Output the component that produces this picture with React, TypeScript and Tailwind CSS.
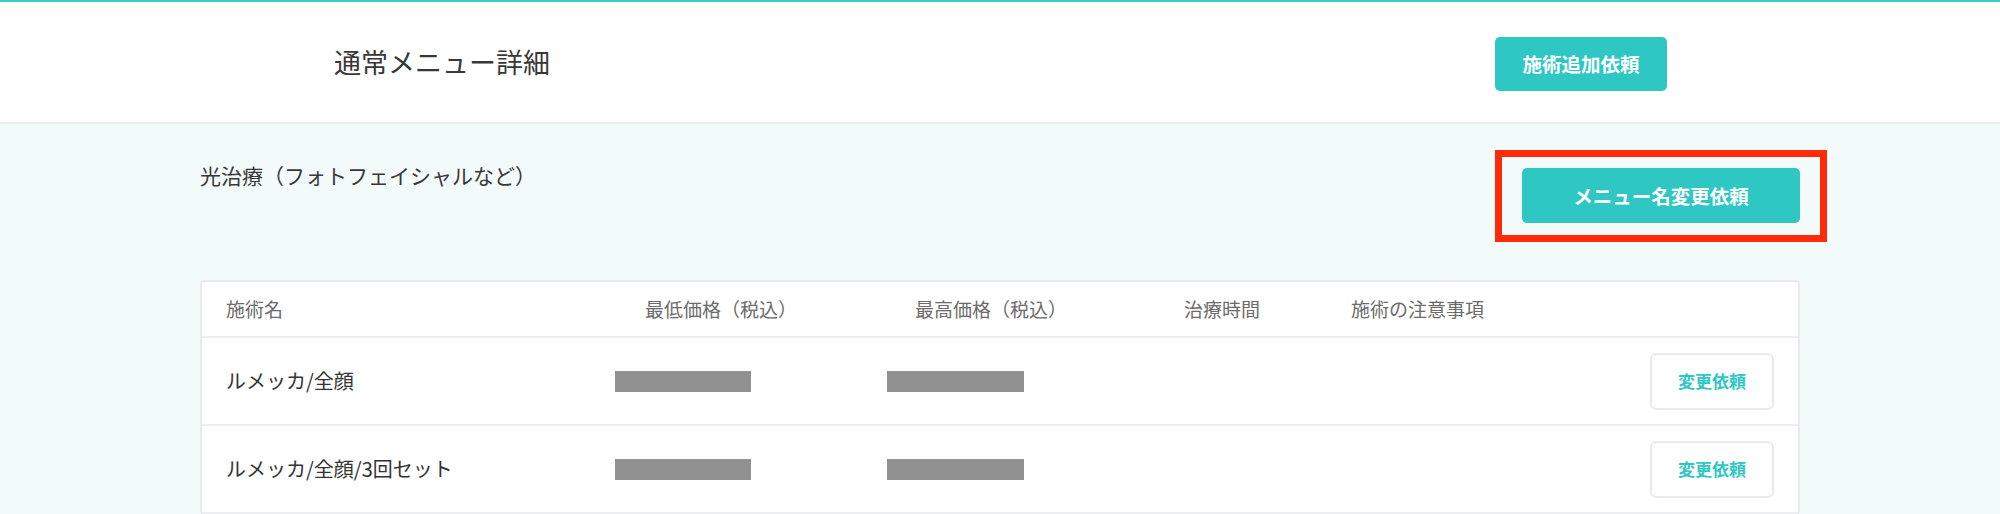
import React from "react";

const rows = ["ルメッカ/全顔", "ルメッカ/全顔/3回セット"];

export default function App() {
  return (
    <div className="w-[2000px] h-[514px] overflow-hidden bg-[#f3fbfa] font-['Noto_Sans_CJK_JP',sans-serif]">
      <header className="h-[124px] bg-white border-t-2 border-t-[#36cdc8] border-b-2 border-b-[#eceeef] flex items-center">
        <div className="pl-[334px] w-[1495px] shrink-0 text-[27px] leading-[40px] text-[#383838]">
          通常メニュー詳細
        </div>
        <button className="mt-[4px] w-[172px] h-[54px] shrink-0 rounded-[5px] bg-[#2ec7c4] text-white font-bold text-[19.5px]">
          施術追加依頼
        </button>
      </header>

      <section className="px-[200px] pt-[26px]">
        <div className="flex items-start">
          <div className="w-[1295px] shrink-0 mt-[10px] text-[21px] leading-[30px] text-[#383838]">
            光治療（フォトフェイシャルなど）
          </div>
          <div className="w-[332px] h-[92px] shrink-0 border-[7px] border-[#ff2a0a] pt-[11px] pl-[20px]">
            <button className="w-[278px] h-[55px] rounded-[5px] bg-[#2ec7c4] text-white font-bold text-[19.5px]">
              メニュー名変更依頼
            </button>
          </div>
        </div>

        <div className="mt-[38px] bg-white border-2 border-[#e8ebec] rounded-[5px]">
          <div className="h-[56px] flex items-center pl-[24px] text-[19px] text-[#6b6b6b] border-b-2 border-[#eceeef]">
            <div className="w-[419px] shrink-0">施術名</div>
            <div className="w-[270px] shrink-0">最低価格（税込）</div>
            <div className="w-[269px] shrink-0">最高価格（税込）</div>
            <div className="w-[167px] shrink-0">治療時間</div>
            <div>施術の注意事項</div>
          </div>
          {rows.map((name, i) => (
            <div
              key={i}
              className="h-[88px] flex items-center pl-[24px] pr-[24px] border-b-2 border-[#eceeef]"
            >
              <div className="w-[389px] shrink-0 text-[20px] text-[#333333]">{name}</div>
              <div className="w-[272px] shrink-0">
                <div className="w-[136px] h-[21px] bg-[#919191]" />
              </div>
              <div className="w-[137px] h-[21px] shrink-0 bg-[#919191]" />
              <div className="flex-1" />
              <button className="w-[124px] h-[57px] shrink-0 rounded-[6px] border-2 border-[#e8ebec] bg-white text-[#2ec7c4] font-bold text-[17px]">
                変更依頼
              </button>
            </div>
          ))}
        </div>
      </section>
    </div>
  );
}
